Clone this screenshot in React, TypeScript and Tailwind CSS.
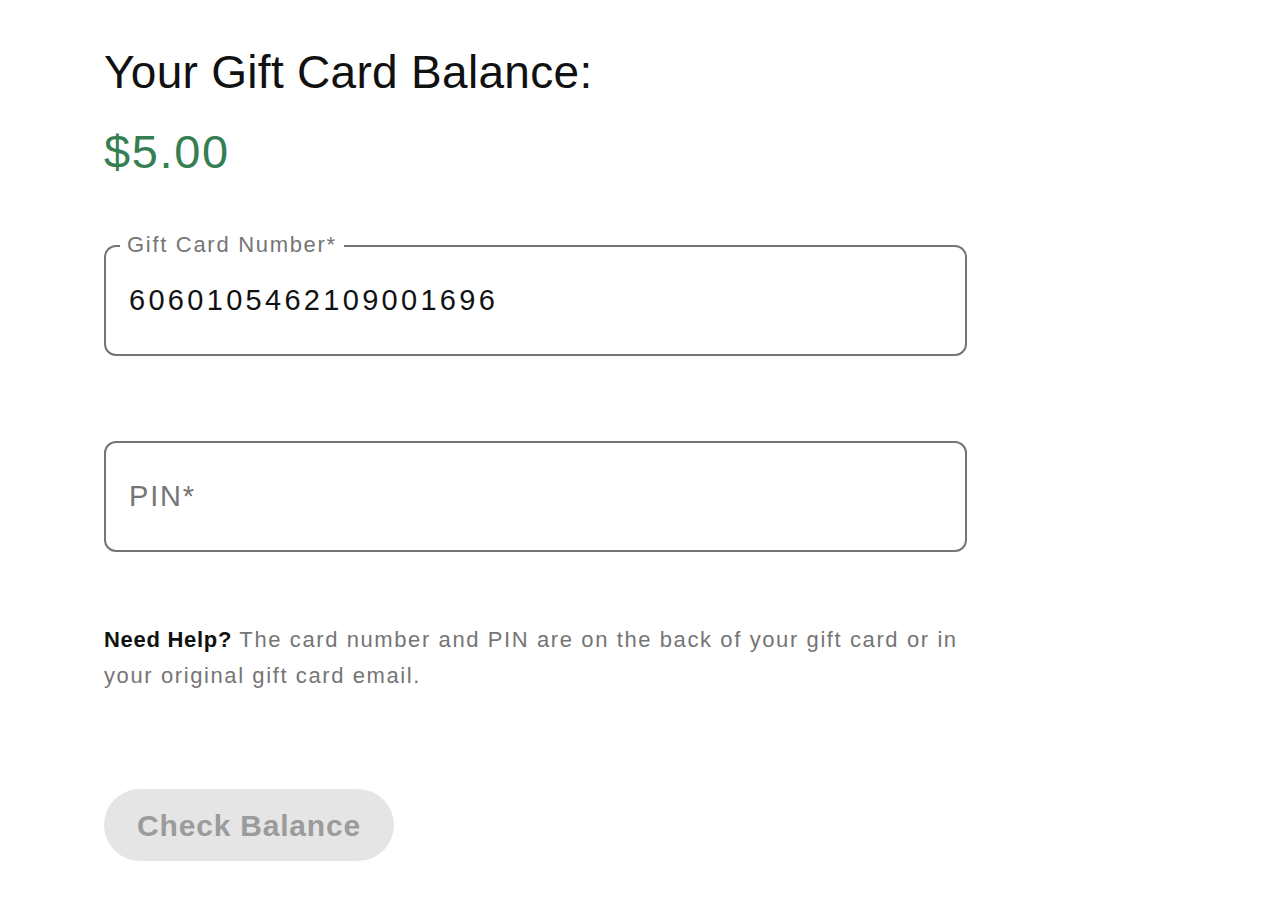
import React from "react";

export default function App() {
  return (
    <div className="min-h-[898px] w-full bg-white" style={{ fontFamily: '"Liberation Sans", Arial, sans-serif' }}>
      <div className="pl-[104px] pt-[44px] w-[967px]">
        <h1 className="text-[46px] leading-[56px] text-[#111111] tracking-[0.3px] font-normal">
          Your Gift Card Balance:
        </h1>
        <div className="mt-[24px] text-[47px] leading-[56px] text-[#357e52] tracking-[1.6px]">$5.00</div>

        <div className="mt-[65px] relative">
          <div className="h-[111px] rounded-[12px] border-2 border-[#757575] flex items-center pl-[23px]">
            <span className="text-[29px] text-[#111111] tracking-[3.3px]">6060105462109001696</span>
          </div>
          <span className="absolute left-[16px] top-[-13px] bg-white px-[7px] text-[22px] leading-[26px] text-[#757575] tracking-[1.7px]">
            Gift Card Number*
          </span>
        </div>

        <div className="mt-[85px] h-[111px] rounded-[12px] border-2 border-[#757575] flex items-center pl-[23px]">
          <span className="text-[29px] text-[#757575] tracking-[1.8px]">PIN*</span>
        </div>

        <p className="mt-[70px] text-[22px] leading-[36px] text-[#757575] tracking-[1.6px] w-[880px]">
          <span className="font-bold text-[#111111] tracking-[0.7px]">Need Help?</span>{" "}
          The card number and PIN are on the back of your gift card or in your original gift card email.
        </p>

        <button className="mt-[95px] h-[72px] w-[290px] rounded-full bg-[#e5e5e5] text-[30px] font-bold text-[#9b9b9b] tracking-[0.8px]">
          Check Balance
        </button>
      </div>
    </div>
  );
}
